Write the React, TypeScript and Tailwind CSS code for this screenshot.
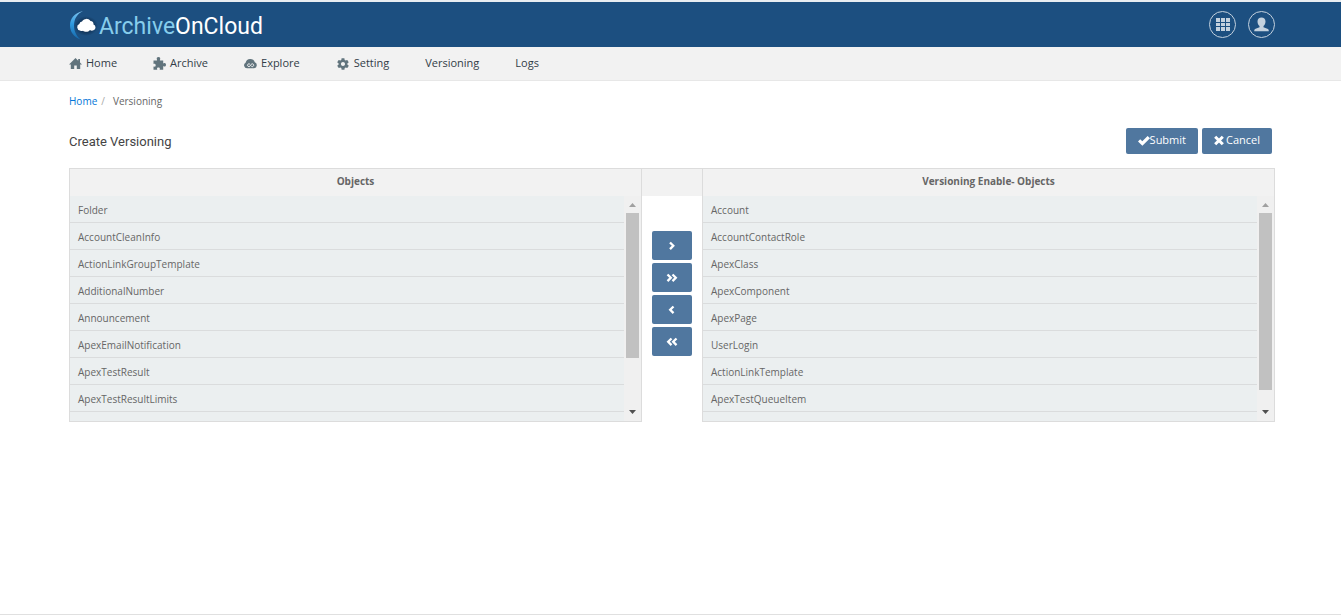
import { ReactNode, useState } from "react";
import { IoMdSettings } from "react-icons/io";

const objects = [
    "Folder",
    "AccountCleanInfo",
    "ActionLinkGroupTemplate",
    "AdditionalNumber",
    "Announcement",
    "ApexEmailNotification",
    "ApexTestResult",
    "ApexTestResultLimits",
];

const versioned = [
    "Account",
    "AccountContactRole",
    "ApexClass",
    "ApexComponent",
    "ApexPage",
    "UserLogin",
    "ActionLinkTemplate",
    "ApexTestQueueItem",
];

function Logo() {
    return (
        <svg className="w-[30px] h-8" viewBox="0 0 30 32" aria-hidden="true">
            <defs>
                <linearGradient id="arc" x1="0" y1="0" x2="0" y2="1">
                    <stop offset="0" stopColor="#7fc4ee" />
                    <stop offset="0.45" stopColor="#2f9ae0" />
                    <stop offset="1" stopColor="#1667a8" />
                </linearGradient>
                <radialGradient id="shade">
                    <stop offset="0.4" stopColor="#0d2a4a" />
                    <stop offset="1" stopColor="#0d2a4a" stopOpacity="0" />
                </radialGradient>
            </defs>
            <ellipse cx="17" cy="17" rx="12" ry="10" fill="url(#shade)" />
            <path d="M14 2C5 4 1 10 1 16.500C1 23 5 28 11.500 30.500C7 26.500 5 22 5 16.500C5 10 8 5 14 2Z" fill="url(#arc)" />
            <path d="M11 21.500A3.400 3.400 0 0 1 10.300 15A3 3 0 0 1 13 12.500A5 5 0 0 1 21.500 12A3.300 3.300 0 0 1 24.500 15.500A3.100 3.100 0 0 1 24.500 21.300C23 22 21.500 21.500 21 21C19.500 23.300 15.500 23.300 14 21.700C13 22.300 12 22.200 11 21.500Z" fill="#fff" />
        </svg>
    );
}

function HomeIcon() {
    return (
        <svg className="w-[13px] h-3" viewBox="0 0 13 12" fill="currentColor" aria-hidden="true">
            <path d="M6.500 0L9.200 2.700V1H11V4.500L13 6.600H11.200V11H7.800V7.500H5.200V11H1.800V6.600H0Z" />
        </svg>
    );
}

function PuzzleIcon() {
    return (
        <svg className="w-[13px] h-[13px]" viewBox="0 0 13 13" fill="currentColor" aria-hidden="true">
            <path d="M.5 3.500H3.800C4.200 3.500 4.200 3.200 4 2.800C3.200 1.300 4 .1 5.500 .1S7.700 1.300 7 2.800C6.700 3.200 6.800 3.500 7.200 3.500H10.200V6.100C10.200 6.500 10.500 6.500 10.800 6.300C12 5.600 13 6.400 13 7.800S12 10 10.800 9.300C10.500 9.100 10.200 9.200 10.200 9.600V12.800H7C6.600 12.800 6.500 12.500 6.700 12.100C7.200 11.200 6.600 10.600 5.400 10.600S3.700 11.200 4.200 12.100C4.400 12.500 4.300 12.800 3.900 12.800H.5V9.900C.5 9.500 .8 9.400 1.200 9.600C2.100 10 2.700 9.200 2.700 8.200S2.100 6.300 1.200 6.800C.8 7 .5 6.900 .5 6.500Z" />
        </svg>
    );
}

function CloudIcon() {
    return (
        <svg className="w-[13px] h-3" viewBox="0 0 13 12" aria-hidden="true">
            <path d="M3 10.300A3 3 0 0 1 1.600 4.700A4.800 4.800 0 0 1 10.800 4.200A3.200 3.200 0 0 1 10.200 10.300Z" fill="currentColor" />
            <path d="M6 6.300A1.400 1.400 0 1 0 6 8.100L7.200 6.300A1.400 1.400 0 1 1 7.200 8.100" fill="none" stroke="#f2f2f2" strokeWidth=".9" />
        </svg>
    );
}

function GridIcon() {
    return (
        <svg className="w-[15px] h-[15px]" viewBox="0 0 15 15" fill="currentColor" aria-hidden="true">
            <path d="M1 1H5V5H1ZM6 1H10V5H6ZM11 1H15V5H11ZM1 6H5V9H1ZM6 6H10V9H6ZM11 6H15V9H11ZM1 10H5V14H1ZM6 10H10V14H6ZM11 10H15V14H11Z" />
        </svg>
    );
}

function UserIcon() {
    return (
        <svg className="w-[15px] h-[15px]" viewBox="0 0 15 15" fill="currentColor" aria-hidden="true">
            <path d="M7.500 .5C9.800 .5 11.500 1.800 11.500 4.400C11.500 6.400 10.600 8 9.500 9V10.300L13.300 11.700C14.300 12.100 14.800 12.800 14.800 14.200H.2C.2 12.800 .7 12.100 1.700 11.700L5.500 10.300V9C4.400 8 3.500 6.400 3.500 4.400C3.500 1.800 5.200 .5 7.500 .5Z" />
        </svg>
    );
}

function CheckIcon() {
    return (
        <svg className="w-3 h-3" viewBox="0 0 12 12" fill="currentColor" aria-hidden="true">
            <path d="M0 6.500L2.200 4.300L4.300 6.300L9.600 1L12 3.200L4.400 10.700Z" />
        </svg>
    );
}

function CrossIcon() {
    return (
        <svg className="w-[10px] h-3" viewBox="0 0 10 12" fill="none" stroke="currentColor" strokeWidth="3" aria-hidden="true">
            <path d="M1.200 1.700L8.800 9.300M8.800 1.700L1.200 9.300" />
        </svg>
    );
}

function MoveButton({ label, path }: { label: string; path: string }) {
    return (
        <button
            aria-label={label}
            className="w-10 h-[29px] flex items-center justify-center rounded-[2px] bg-[#50779f] text-white hover:bg-[#426890]">
            <svg className="w-3 h-3" viewBox="0 0 12 12" fill="none" stroke="currentColor" strokeWidth="2.300" aria-hidden="true">
                <path d={path} />
            </svg>
        </button>
    );
}

function NavLink({ icon, children }: { icon?: ReactNode; children: ReactNode }) {
    return (
        <a href="#" className="flex items-center gap-1 text-[11px] text-[#333d47]">
            {icon && <span className="text-[#61747d]">{icon}</span>}
            {children}
        </a>
    );
}

function ObjectList({ title, items, total }: { title: string; items: string[]; total: number }) {
    const [selected, setSelected] = useState("");
    const thumb = Math.min(100, (225 / (total * 27)) * 100);

    return (
        <section className="flex-1 min-w-0 border border-[#dcdcdc]">
            <h2 className="h-[27px] flex items-center justify-center bg-[#f2f2f2] pb-0.5 text-[10px] font-bold text-[#666]">
                {title}
            </h2>
            <div className="flex h-[225px]">
                <ul className="flex-1 min-w-0 overflow-hidden bg-[#ebeff0]">
                    {items.map((item) => (
                        <li key={item} className="h-[27px] border-b border-[#dadcdd]">
                            <button
                                aria-pressed={selected === item}
                                onClick={() => setSelected(item)}
                                className="w-full h-full px-2 pb-1 text-left text-[10px] leading-4 text-[#666] aria-pressed:text-black">
                                {item}
                            </button>
                        </li>
                    ))}
                </ul>
                <div className="w-[17px] flex flex-col items-center bg-[#f0f0f0]" aria-hidden="true">
                    <svg className="w-[7px] h-[17px] shrink-0" viewBox="0 0 7 17" fill="#a0a0a0">
                        <path d="M0 11L3.500 7L7 11Z" />
                    </svg>
                    <div className="flex-1 w-[13px]">
                        <div className="w-full bg-[#c1c1c1]" style={{ height: `${thumb}%` }} />
                    </div>
                    <svg className="w-[7px] h-[17px] shrink-0" viewBox="0 0 7 17" fill="#505050">
                        <path d="M0 6L3.500 10L7 6Z" />
                    </svg>
                </div>
            </div>
        </section>
    );
}

function App() {
    return (
        <div className="min-h-screen flex flex-col bg-white pb-px font-['Open_Sans',sans-serif]">
            <header className="h-[47px] flex items-center justify-between border-t-2 border-[#e8edf1] bg-[#1c4f80] pl-[69px] pr-[66px]">
                <a href="#" className="flex items-center font-['Roboto',sans-serif] text-[23px] leading-7 text-white">
                    <Logo />
                    <span className="pt-1"><span className="text-[#87cdec]">Archive</span>OnCloud</span>
                </a>
                <div className="flex gap-3 text-[#c3d1de]">
                    <button aria-label="Apps" className="size-[27px] flex items-center justify-center rounded-full border border-[#c3d1de]">
                        <GridIcon />
                    </button>
                    <button aria-label="Account" className="size-[27px] flex items-center justify-center rounded-full border border-[#c3d1de]">
                        <UserIcon />
                    </button>
                </div>
            </header>

            <nav className="h-[34px] flex items-center gap-9 border-b border-[#e7e7e7] bg-[#f2f2f2] pl-[69px] pr-[66px]">
                <NavLink icon={<HomeIcon />}>Home</NavLink>
                <NavLink icon={<PuzzleIcon />}>Archive</NavLink>
                <NavLink icon={<CloudIcon />}>Explore</NavLink>
                <NavLink icon={<IoMdSettings size={14} />}>Setting</NavLink>
                <NavLink>Versioning</NavLink>
                <NavLink>Logs</NavLink>
            </nav>

            <main className="flex-1 border-b border-[#e0e0e0] pl-[69px] pr-[66px]">
                <div className="flex h-10 items-center gap-1 text-[10px] text-[#666]">
                    <a href="#" className="text-[#0275d8]">Home</a>
                    <span className="text-[#aaa]">/</span>
                    <span className="pl-1">Versioning</span>
                </div>

                <div className="flex h-[47px] items-center justify-between pb-2">
                    <h1 className="pt-0.5 font-['Roboto',sans-serif] text-[13px] text-[#444]">Create Versioning</h1>
                    <div className="flex gap-1 pr-[3px] text-[11px] text-white">
                        <button className="h-[26px] flex items-center rounded-[2px] bg-[#50779f] px-3 hover:bg-[#426890]">
                            <CheckIcon />
                            Submit
                        </button>
                        <button className="h-[26px] flex items-center gap-0.5 rounded-[2px] bg-[#50779f] px-3 hover:bg-[#426890]">
                            <CrossIcon />
                            Cancel
                        </button>
                    </div>
                </div>

                <div className="flex">
                    <ObjectList title="Objects" items={objects} total={11} />
                    <div className="w-[60px] flex flex-col items-center">
                        <div className="w-full h-7 border-t border-[#dcdcdc] bg-[#f2f2f2]" />
                        <div className="flex flex-col gap-[3px] pt-[35px]">
                            <MoveButton label="Add selected" path="M4 2.500L7.300 5.800L4 9.100" />
                            <MoveButton label="Add all" path="M1.500 2.500L4.800 5.800L1.500 9.100M6.500 2.500L9.800 5.800L6.500 9.100" />
                            <MoveButton label="Remove selected" path="M7.500 2.500L4.200 5.800L7.500 9.100" />
                            <MoveButton label="Remove all" path="M5.500 2.500L2.200 5.800L5.500 9.100M10.500 2.500L7.200 5.800L10.500 9.100" />
                        </div>
                    </div>
                    <ObjectList title="Versioning Enable- Objects" items={versioned} total={9} />
                </div>
            </main>
        </div>
    );
}

export default App;
